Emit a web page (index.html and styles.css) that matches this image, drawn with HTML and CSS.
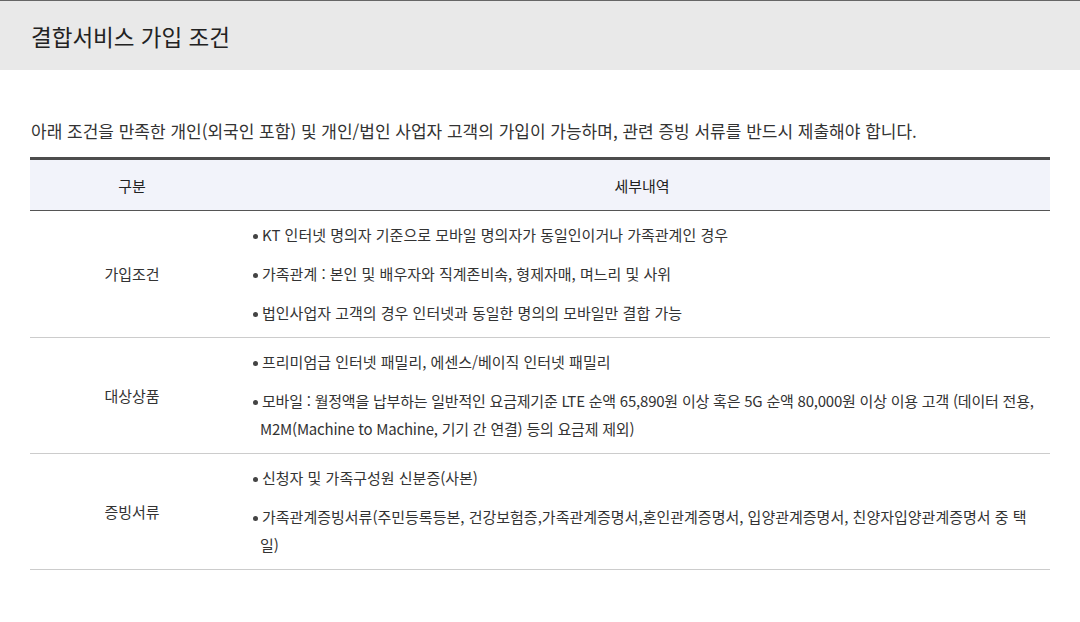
FILE: index.html
```html
<!DOCTYPE html>
<html lang="ko">
<head>
    <meta charset="UTF-8">
    <meta name="viewport" content="width=device-width, initial-scale=1.0">
    <title>결합서비스 가입 조건</title>
    <link rel="stylesheet" href="styles.css">
</head>
<body>
    <div class="page-head">
        <h2>결합서비스 가입 조건</h2>
    </div>

    <div class="content">
        <p class="intro">아래 조건을 만족한 개인(외국인 포함) 및 개인/법인 사업자 고객의 가입이 가능하며, 관련 증빙 서류를 반드시 제출해야 합니다.</p>

        <table class="cond-table">
            <colgroup>
                <col class="col-type">
                <col>
            </colgroup>
            <thead>
                <tr>
                    <th>구분</th>
                    <th>세부내역</th>
                </tr>
            </thead>
            <tbody>
                <tr>
                    <td class="type">가입조건</td>
                    <td>
                        <ul class="dot-list">
                            <li>KT 인터넷 명의자 기준으로 모바일 명의자가 동일인이거나 가족관계인 경우</li>
                            <li>가족관계 : 본인 및 배우자와 직계존비속, 형제자매, 며느리 및 사위</li>
                            <li>법인사업자 고객의 경우 인터넷과 동일한 명의의 모바일만 결합 가능</li>
                        </ul>
                    </td>
                </tr>
                <tr>
                    <td class="type">대상상품</td>
                    <td>
                        <ul class="dot-list">
                            <li>프리미엄급 인터넷 패밀리, 에센스/베이직 인터넷 패밀리</li>
                            <li class="tight">모바일 : 월정액을 납부하는 일반적인 요금제기준 LTE 순액 65,890원 이상 혹은 5G 순액 80,000원 이상 이용 고객 (데이터 전용, M2M(Machine to Machine, 기기 간 연결) 등의 요금제 제외)</li>
                        </ul>
                    </td>
                </tr>
                <tr>
                    <td class="type">증빙서류</td>
                    <td>
                        <ul class="dot-list">
                            <li>신청자 및 가족구성원 신분증(사본)</li>
                            <li>가족관계증빙서류(주민등록등본, 건강보험증,가족관계증명서,혼인관계증명서, 입양관계증명서, 친양자입양관계증명서 중 택일)</li>
                        </ul>
                    </td>
                </tr>
            </tbody>
        </table>
    </div>
</body>
</html>
```

FILE: styles.css
```css
body {
    margin: 0;
    font-family: "Noto Sans CJK KR", "Noto Sans", sans-serif;
    color: #333;
    background: #fff;
}

.page-head {
    height: 69px;
    border-top: 1px solid #666;
    background: #e9e9e9;
    padding: 0 31px;
    display: flex;
    align-items: center;
}

.page-head h2 {
    margin: 0;
    font-size: 22.5px;
    font-weight: 400;
    color: #222;
}

.content {
    padding: 0 30px;
}

.intro {
    margin: 49px 0 14px;
    padding-left: 1px;
    font-size: 17px;
    line-height: 24px;
}

.cond-table {
    width: 100%;
    border-collapse: collapse;
    border-top: 3px solid #4d4d4d;
    font-size: 15px;
}

.col-type {
    width: 20%;
}

.cond-table th {
    height: 50px;
    padding: 0;
    background: #f2f3fa;
    border-bottom: 1px solid #555;
    font-weight: 400;
    color: #222;
}

.cond-table td {
    padding: 10px 10px 10px 19px;
    border-bottom: 1px solid #ccc;
    vertical-align: middle;
    line-height: 28px;
}

.cond-table td.type {
    padding: 0;
    text-align: center;
}

.dot-list {
    margin: 0;
    padding: 0;
    list-style: none;
}

.dot-list li {
    padding-left: 7px;
    text-indent: -7px;
}

.dot-list li.tight {
    letter-spacing: -0.22px;
}

.dot-list li + li {
    margin-top: 11px;
}

.dot-list li::before {
    content: "";
    display: inline-block;
    width: 5px;
    height: 5px;
    margin-right: 4px;
    border-radius: 50%;
    background: #444;
    vertical-align: middle;
}
```
